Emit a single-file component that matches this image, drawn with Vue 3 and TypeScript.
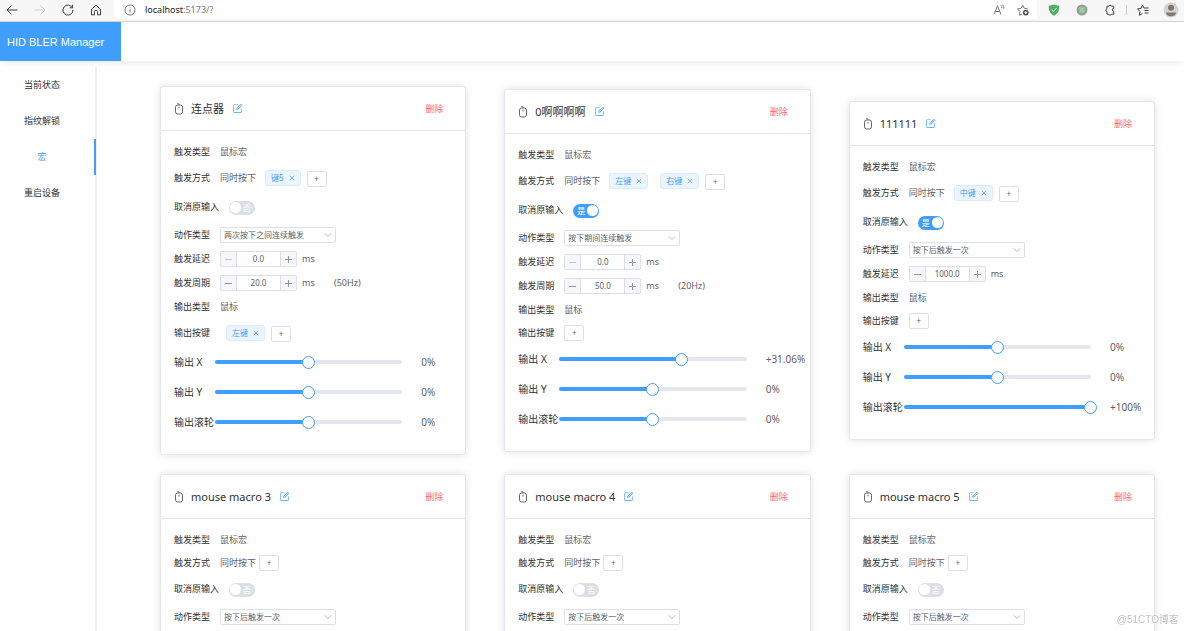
<script setup lang="ts">
import { ref } from 'vue'

interface Axis {
  label: string
  value: number
}

interface Macro {
  id: number
  name: string
  triggers: string[]
  block: boolean
  action: string
  delay: string | null
  period: string | null
  outputs: string[]
  axes: Axis[]
}

const axes = (x: number, y: number, wheel: number): Axis[] => [
  { label: '输出 X', value: x },
  { label: '输出 Y', value: y },
  { label: '输出滚轮', value: wheel },
]

const actions = ['按下后触发一次', '按下期间连续触发', '两次按下之间连续触发']

const plain = (id: number): Macro => ({
  id,
  name: `mouse macro ${id}`,
  triggers: [],
  block: false,
  action: actions[0],
  delay: '0.0',
  period: null,
  outputs: [],
  axes: axes(0, 0, 0),
})

const macros = ref<Macro[]>([
  { id: 0, name: '连点器', triggers: ['键5'], block: false, action: actions[2], delay: '0.0', period: '20.0', outputs: ['左键'], axes: axes(0, 0, 0) },
  { id: 1, name: '0啊啊啊啊', triggers: ['左键', '右键'], block: true, action: actions[1], delay: '0.0', period: '50.0', outputs: [], axes: axes(31.06, 0, 0) },
  { id: 2, name: '111111', triggers: ['中键'], block: true, action: actions[0], delay: '1000.0', period: null, outputs: [], axes: axes(0, 0, 100) },
  plain(3),
  plain(4),
  plain(5),
])

const menu = ['当前状态', '指纹解锁', '宏', '重启设备']
const active = ref('宏')

const percent = (v: number) => (v > 0 ? `+${v}%` : `${v}%`)
const hertz = (period: string) => Math.round(1000 / Number(period))

function bump(m: Macro, key: 'delay' | 'period', by: number) {
  m[key] = Math.max(0, Number(m[key]) + by).toFixed(1)
}
function remove(list: string[], i: number) {
  list.splice(i, 1)
}
function removeMacro(id: number) {
  macros.value = macros.value.filter((m) => m.id !== id)
}
</script>

<template>
  <div class="window">
    <div class="toolbar">
      <div class="nav-buttons">
        <button class="tool" aria-label="后退">
          <svg width="12" height="12" viewBox="0 0 12 12"><path d="M11.5 6H1M5.5 1.5 1 6l4.500 4.500" /></svg>
        </button>
        <button class="tool faded" aria-label="前进">
          <svg width="12" height="12" viewBox="0 0 12 12"><path d="M.5 6H11M6.500 1.500 11 6l-4.500 4.500" /></svg>
        </button>
        <button class="tool" aria-label="刷新">
          <svg width="12" height="12" viewBox="0 0 12 12"><path d="M10.300 3.500A5 5 0 1 0 11 6M10.600.8v3H7.600" /></svg>
        </button>
        <button class="tool" aria-label="主页">
          <svg width="12" height="12" viewBox="0 0 12 12"><path d="M1.500 5.200 6 1.200l4.500 4v5.600H7.600V7.500a1 1 0 0 0-1-1H5.400a1 1 0 0 0-1 1v3.300H1.500z" /></svg>
        </button>
      </div>
      <div class="address">
        <svg class="info" width="12" height="12" viewBox="0 0 12 12"><circle cx="6" cy="6" r="5" /><path d="M6 5.300v3.200M6 3.300v1" /></svg>
        <span class="url">localhost<span class="port">:5173/?</span></span>
        <button class="tool soft" aria-label="大声朗读">
          <svg width="12" height="12" viewBox="0 0 12 12"><path d="M1 10.500 4.500 1.800 8 10.500M2.200 7.500h4.600M8 1.500q1 1 .8 2.500M9.700.8q1.500 1.500 1.100 4" /></svg>
        </button>
        <button class="tool soft" aria-label="添加到收藏夹">
          <svg width="12" height="12" viewBox="0 0 12 12"><path d="M5 10 2.400 11.200l.5-3.700L.6 4.900l3.500-.6L5.700 1.200l1.700 3.100 3.400.6" /><circle class="dot" cx="8.800" cy="8.600" r="2.900" /><path class="mark" d="M8.800 7.200V10M7.400 8.600h2.800" /></svg>
        </button>
      </div>
      <div class="extensions">
        <button class="tool" aria-label="安全扩展">
          <svg width="12" height="12" viewBox="0 0 12 12"><path class="shield" d="M6 .5 11.300 2c0 5-1.600 7.800-5.300 9.700C2.300 9.800.7 7 .7 2z" /><path class="mark" d="M3.700 5.500 5.500 7.300 8.600 4" /></svg>
        </button>
        <button class="tool" aria-label="状态扩展">
          <svg width="12" height="12" viewBox="0 0 12 12"><circle class="ring" cx="6" cy="6" r="5.500" /><circle class="lime" cx="6" cy="6" r="3" /></svg>
        </button>
        <button class="tool" aria-label="扩展">
          <svg width="12" height="12" viewBox="0 0 12 12"><path d="M3 2.200h1.800a1.400 1.400 0 0 1 2.700 0h2.300v2.200a1.400 1.400 0 0 0 0 2.900v2.900H7.500a1.400 1.400 0 0 1-2.700 0H3V7.600a1.500 1.500 0 0 1 0-2.900z" /></svg>
        </button>
        <span class="divider"></span>
        <button class="tool" aria-label="收藏夹">
          <svg width="12" height="12" viewBox="0 0 12 12"><path d="M5.500 9.500 2.400 11.200l.5-3.700L.6 4.900l3.500-.6L5.500 1.200 7 4h4.500M7.500 6.500h4M7.500 9h4" /></svg>
        </button>
        <button class="tool" aria-label="用户">
          <svg width="16" height="16" viewBox="0 0 16 16"><circle class="avatar" cx="8" cy="8" r="7.500" /><circle class="person" cx="8" cy="5.800" r="3" /><path class="person" d="M3 10.500h10c0 2-2 3.800-5 3.800s-5-1.800-5-3.800z" /></svg>
        </button>
      </div>
    </div>

    <header class="topbar">
      <h1 class="brand">HID BLER Manager</h1>
    </header>

    <div class="shell">
      <nav class="sidebar">
        <a v-for="item in menu" :key="item" href="#" class="menu-item" :class="{ current: item === active }" @click.prevent="active = item">{{ item }}</a>
      </nav>

      <main class="cards">
        <section v-for="m in macros" :key="m.id" class="card">
          <header class="card-head">
            <svg class="mouse" width="10" height="12" viewBox="0 0 10 12"><rect x="1.500" y="2" width="7" height="9" rx="2.200" /><path d="M5 3.800v1.700M5 2V1.400Q5 .6 4.200.6H3.300" /></svg>
            <h2 class="title">{{ m.name }}</h2>
            <button class="edit" aria-label="编辑名称">
              <svg width="11" height="11" viewBox="0 0 1024 1024"><path d="M832 512a32 32 0 1 1 64 0v352a32 32 0 0 1-32 32H160a32 32 0 0 1-32-32V160a32 32 0 0 1 32-32h352a32 32 0 0 1 0 64H192v640h640V512z" /><path d="m469.952 554.240 52.800-7.552L847.104 222.400a32 32 0 1 0-45.248-45.248L477.440 501.440l-7.552 52.800zm422.400-422.400a96 96 0 0 1 0 135.808l-331.840 331.840a32 32 0 0 1-18.112 9.088L436.800 623.680a32 32 0 0 1-36.224-36.224l15.104-105.600a32 32 0 0 1 9.024-18.112l331.904-331.840a96 96 0 0 1 135.744 0z" /></svg>
            </button>
            <button class="delete" @click="removeMacro(m.id)">删除</button>
          </header>

          <div class="card-body">
            <div class="row"><span class="label">触发类型</span><span class="text">鼠标宏</span></div>

            <div class="row" :class="m.triggers.length ? 'tagged' : 'untagged'">
              <span class="label">触发方式</span><span class="text mode">同时按下</span>
              <span v-for="(t, i) in m.triggers" :key="t" class="tag">{{ t }}
                <button class="close" :aria-label="`移除${t}`" @click="remove(m.triggers, i)"><svg width="6" height="6" viewBox="0 0 6 6"><path d="m.7.7 4.600 4.600m0-4.600L.7 5.300" /></svg></button>
              </span>
              <button class="add" :class="{ lower: m.triggers.length }">+</button>
            </div>

            <div class="row switch-row">
              <label class="label" :for="`block-${m.id}`">取消原输入</label>
              <span class="switch" :class="{ on: m.block }">
                <input :id="`block-${m.id}`" v-model="m.block" type="checkbox" role="switch" />
                <span class="state">{{ m.block ? '是' : '否' }}</span>
              </span>
            </div>

            <div class="row action-row">
              <label class="label" :for="`action-${m.id}`">动作类型</label>
              <span class="select">
                <select :id="`action-${m.id}`" v-model="m.action">
                  <option v-for="a in actions" :key="a">{{ a }}</option>
                </select>
                <svg width="8" height="8" viewBox="0 0 8 8"><path d="m.8 2.300 3.200 3.200 3.200-3.200" /></svg>
              </span>
            </div>

            <div v-if="m.delay !== null" class="row">
              <label class="label" :for="`delay-${m.id}`">触发延迟</label>
              <span class="number">
                <button aria-label="减少延迟" :class="{ off: Number(m.delay) === 0 }" @click="bump(m, 'delay', -1)"><svg width="7" height="7" viewBox="0 0 7 7"><path d="M0 3.500h7" /></svg></button>
                <input :id="`delay-${m.id}`" v-model="m.delay" type="text" inputmode="decimal" />
                <button aria-label="增加延迟" @click="bump(m, 'delay', 1)"><svg width="7" height="7" viewBox="0 0 7 7"><path d="M0 3.500h7M3.500 0v7" /></svg></button>
              </span>
              <span class="text unit">ms</span>
            </div>

            <div v-if="m.period !== null" class="row">
              <label class="label" :for="`period-${m.id}`">触发周期</label>
              <span class="number">
                <button aria-label="减少周期" @click="bump(m, 'period', -1)"><svg width="7" height="7" viewBox="0 0 7 7"><path d="M0 3.500h7" /></svg></button>
                <input :id="`period-${m.id}`" v-model="m.period" type="text" inputmode="decimal" />
                <button aria-label="增加周期" @click="bump(m, 'period', 1)"><svg width="7" height="7" viewBox="0 0 7 7"><path d="M0 3.500h7M3.500 0v7" /></svg></button>
              </span>
              <span class="text unit">ms</span><span class="text">({{ hertz(m.period) }}Hz)</span>
            </div>

            <div class="row"><span class="label">输出类型</span><span class="text">鼠标</span></div>

            <div class="row" :class="m.outputs.length ? 'tagged' : 'untagged'">
              <span class="label">输出按键</span>
              <span v-for="(t, i) in m.outputs" :key="t" class="tag">{{ t }}
                <button class="close" :aria-label="`移除${t}`" @click="remove(m.outputs, i)"><svg width="6" height="6" viewBox="0 0 6 6"><path d="m.7.7 4.600 4.600m0-4.600L.7 5.300" /></svg></button>
              </span>
              <button class="add" :class="{ lower: m.outputs.length }">+</button>
            </div>

            <div v-for="(axis, i) in m.axes" :key="axis.label" class="axis">
              <label class="axis-label" :for="`axis-${m.id}-${i}`">{{ axis.label }}</label>
              <span class="slider">
                <span class="rail"><span class="fill" :style="{ width: (axis.value + 100) / 2 + '%' }"></span></span>
                <input :id="`axis-${m.id}-${i}`" v-model.number="axis.value" type="range" min="-100" max="100" step="0.01" />
              </span>
              <output class="amount" :for="`axis-${m.id}-${i}`">{{ percent(axis.value) }}</output>
            </div>
          </div>
        </section>
      </main>
    </div>

    <div class="watermark">@51CTO博客</div>
  </div>
</template>

<style>
html {
  background: #fff;
  scrollbar-width: none;
}
</style>

<style scoped>
.window {
  display: flex;
  flex-direction: column;
  min-height: 100vh;
  font-family: 'Noto Sans', 'Noto Sans CJK SC', sans-serif;
  font-size: 9px;
  line-height: 14px;
  color: #606266;
}
.window *,
.window *::before {
  box-sizing: border-box;
}
button,
input,
select {
  margin: 0;
  padding: 0;
  border: 0;
  background: none;
  font: inherit;
  color: inherit;
}
svg {
  display: block;
  fill: none;
  stroke: currentColor;
}

/* browser toolbar */
.toolbar {
  display: flex;
  flex: none;
  height: 22px;
  padding-bottom: 2px;
  background: #f7f7f7;
  border-bottom: 1px solid #d4d4d4;
}
.nav-buttons,
.extensions {
  display: flex;
  align-items: center;
  gap: 4px;
}
.tool {
  display: flex;
  align-items: center;
  justify-content: center;
  width: 24px;
  height: 19px;
  color: #3c3c3c;
}
.faded {
  color: #cfcfcf;
}
.soft {
  color: #777;
}
.address {
  display: flex;
  flex: 1;
  align-items: center;
  margin-left: 6px;
  padding: 0 2px 0 10px;
  background: #fff;
  border-radius: 0 0 3px 3px;
}
.info {
  color: #777;
}
.url {
  flex: 1;
  margin-left: 9px;
  color: #222;
}
.port {
  color: #777;
}
.extensions {
  padding: 0 1px 0 5px;
}
.divider {
  width: 1px;
  height: 10px;
  background: #ccc;
}
.dot {
  fill: #555;
  stroke: none;
}
.mark {
  stroke: #fff;
}
.shield {
  fill: #4caf62;
  stroke: none;
}
.ring {
  fill: #9c9c9c;
  stroke: none;
}
.lime {
  fill: #8fd694;
  stroke: none;
}
.avatar {
  fill: #d6d3d0;
  stroke: none;
}
.person {
  fill: #7d7874;
  stroke: none;
}

/* application header */
.topbar {
  display: flex;
  flex: none;
  height: 39px;
  background: #fff;
  box-shadow: 0 0 9px rgba(0, 0, 0, 0.12);
  clip-path: inset(0 0 -12px 0);
}
.brand {
  display: flex;
  align-items: center;
  width: 121px;
  margin: 0;
  padding-left: 7px;
  background: #409eff;
  color: #fff;
  font-family: 'Liberation Sans', Arial, sans-serif;
  font-size: 11px;
  font-weight: 400;
}
.shell {
  display: flex;
  flex: 1;
  padding-top: 6px;
}
.sidebar {
  display: flex;
  flex: none;
  flex-direction: column;
  width: 97px;
  border-right: 2px solid #f0f0f2;
}
.menu-item {
  height: 36px;
  margin-right: -1px;
  padding-right: 10px;
  border-right: 2px solid transparent;
  color: #303133;
  line-height: 36px;
  text-align: center;
  text-decoration: none;
}
.current {
  border-right-color: #409eff;
  color: #409eff;
}

/* macro cards */
.cards {
  display: grid;
  flex: 1;
  grid-template-columns: repeat(3, minmax(0, 1fr));
  gap: 19px 38px;
  align-content: start;
  align-items: center;
  padding: 19px 29px 19px 63px;
}
.card {
  background: #fff;
  border: 1px solid #e4e7ed;
  border-radius: 3px;
  box-shadow: 0 0 9px rgba(0, 0, 0, 0.12);
}
.card-head {
  display: flex;
  align-items: center;
  height: 44px;
  padding: 0 22px 0 13px;
  border-bottom: 1px solid #e4e7ed;
}
.mouse {
  color: #606266;
}
.title {
  margin: 0 8px 0 7px;
  color: #303133;
  font-size: 11px;
  font-weight: 400;
  line-height: 18px;
}
.edit svg {
  fill: #409eff;
  stroke: none;
}
.delete {
  margin-left: auto;
  color: #f56c6c;
}
.card-body {
  padding: 9px 0 17px 13px;
}
.row {
  display: flex;
  align-items: center;
  height: 24px;
}
.tagged {
  height: 28px;
}
.untagged {
  height: 22px;
}
.switch-row {
  height: 30px;
}
.action-row {
  height: 25px;
}
.label {
  margin-right: 10px;
  color: #303133;
}
.mode {
  margin-right: 3px;
}
.tag {
  display: flex;
  align-items: center;
  gap: 5px;
  height: 16px;
  margin: 0 6px;
  padding: 0 5px;
  background: #ecf5ff;
  border: 1px solid #d9ecff;
  border-radius: 3px;
  color: #409eff;
  font-size: 8px;
}
.close svg {
  stroke-width: 0.7;
}
.add {
  width: 20px;
  height: 16px;
  border: 1px solid #dcdfe6;
  border-radius: 2px;
  font-size: 8px;
  line-height: 12px;
}
.lower {
  margin-top: 2px;
}
.switch {
  display: grid;
  align-items: center;
  width: 26px;
  height: 13px;
}
.switch > * {
  grid-area: 1 / 1;
}
.switch input {
  width: 100%;
  height: 100%;
  padding: 1px;
  appearance: none;
  background: #dcdfe6;
  border-radius: 7px;
}
.switch input::before {
  display: block;
  width: 11px;
  height: 11px;
  background: #fff;
  border-radius: 50%;
  content: '';
}
.switch.on input {
  background: #409eff;
}
.switch.on input::before {
  margin-left: auto;
}
.state {
  z-index: 1;
  padding: 0 4px;
  color: #fff;
  font-size: 8px;
  text-align: right;
  pointer-events: none;
}
.on .state {
  text-align: left;
}
.select {
  display: grid;
  align-items: center;
  width: 116px;
  font-size: 8px;
}
.select > * {
  grid-area: 1 / 1;
}
.select select {
  height: 16px;
  padding: 0 16px 0 3px;
  appearance: none;
  border: 1px solid #dcdfe6;
  border-radius: 2px;
}
.select svg {
  justify-self: end;
  margin-right: 4px;
  color: #b4b7bd;
  pointer-events: none;
}
.number {
  display: flex;
  width: 77px;
  height: 16px;
  border: 1px solid #dcdfe6;
  border-radius: 2px;
  font-size: 8px;
}
.number input {
  flex: 1;
  min-width: 0;
  border: solid #dcdfe6;
  border-width: 0 1px;
  text-align: center;
}
.number button {
  display: flex;
  align-items: center;
  justify-content: center;
  width: 15px;
  background: #f5f7fa;
  color: #94979c;
}
.number .off {
  color: #c4c7cc;
}
.unit {
  width: 37px;
  padding-left: 5px;
}
.axis {
  display: flex;
  align-items: center;
  height: 30px;
  font-size: 10px;
}
.axis-label {
  flex: none;
  width: 41px;
  color: #303133;
}
.slider {
  display: grid;
  flex: 1;
  align-items: center;
}
.slider > * {
  grid-area: 1 / 1;
}
.rail {
  height: 4px;
  background: #e4e7ed;
  border-radius: 2px;
}
.fill {
  display: block;
  height: 4px;
  background: #409eff;
  border-radius: 2px;
}
.slider input {
  height: 13px;
  margin: 0 -6px;
  appearance: none;
}
.slider input::-webkit-slider-thumb {
  box-sizing: border-box;
  width: 13px;
  height: 13px;
  appearance: none;
  background: #fff;
  border: 1px solid #409eff;
  border-radius: 50%;
}
.amount {
  flex: none;
  width: 44px;
  margin-left: 19px;
}

.watermark {
  position: fixed;
  right: 5px;
  bottom: 4px;
  color: #c4c4c4;
  font-family: 'Liberation Sans', 'Noto Sans CJK SC', sans-serif;
  font-size: 10px;
}
</style>
